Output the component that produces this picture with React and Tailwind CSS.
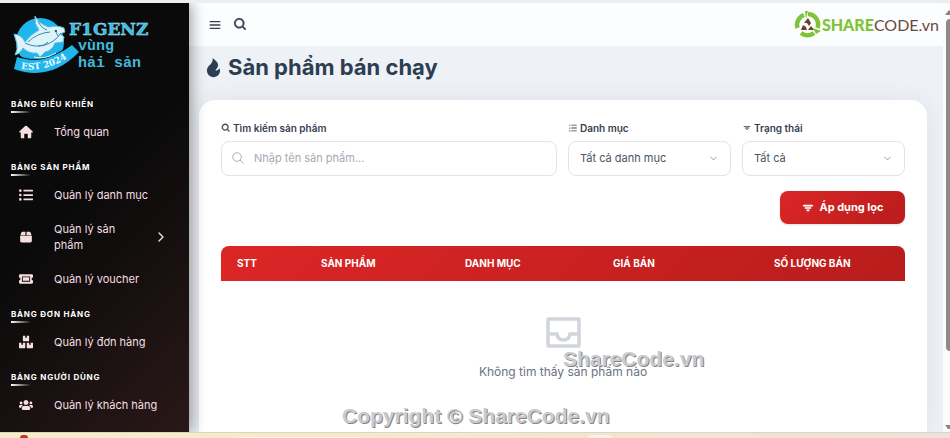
import { BiFilter, BiMenu, BiSearch } from 'react-icons/bi';
import { FaBoxes, FaListUl, FaUsers } from 'react-icons/fa';
import { IoSearchOutline } from 'react-icons/io5';
import { RiFireFill, RiListUnordered } from 'react-icons/ri';
import { ChevronDown, ChevronRight } from 'lucide-react';

const HomeIcon = (props) => (
    <svg viewBox="0 0 24 24" fill="currentColor" {...props}>
        <path d="M10.500 1.800q1.500-1.300 3 0L23.500 11q.8 1.800-1.200 2H21v8q0 1.500-1.500 1.500H15V16q0-1-1-1h-4q-1 0-1 1v6.500H4.500Q3 22.500 3 21v-8H1.700q-2-.2-1.200-2Z" />
    </svg>
);

const BoxIcon = (props) => (
    <svg viewBox="0 0 24 24" fill="currentColor" {...props}>
        <path d="M6 3h5v6H2.500L4 4.500Q4.500 3 6 3ZM13 3h5q1.500 0 2 1.500L21.500 9H13ZM2 10h20v9q0 2.500-2.500 2.500h-15Q2 21.500 2 19Z" />
    </svg>
);

const TicketIcon = (props) => (
    <svg viewBox="0 0 24 24" fill="currentColor" {...props}>
        <path fillRule="evenodd" d="M2 4h20q2 0 2 2v3.500a2.500 2.500 0 0 0 0 5V18q0 2-2 2H2q-2 0-2-2v-3.500a2.500 2.500 0 0 0 0-5V6q0-2 2-2ZM5 7.500v9h14v-9Z" />
        <path d="M6.500 9h11v6h-11z" />
    </svg>
);

const menu = [
    { title: 'BẢNG ĐIỀU KHIỂN', items: [{ label: 'Tổng quan', icon: HomeIcon }] },
    {
        title: 'BẢNG SẢN PHẨM',
        items: [
            { label: 'Quản lý danh mục', icon: FaListUl },
            { label: 'Quản lý sản phẩm', icon: BoxIcon, more: true },
            { label: 'Quản lý voucher', icon: TicketIcon },
        ],
    },
    { title: 'BẢNG ĐƠN HÀNG', items: [{ label: 'Quản lý đơn hàng', icon: FaBoxes }] },
    { title: 'BẢNG NGƯỜI DÙNG', items: [{ label: 'Quản lý khách hàng', icon: FaUsers }] },
];

function BrandLogo() {
    return (
        <svg className="ml-3 h-[60px] w-[144px] shrink-0" viewBox="0 0 144 60">
            <circle cx="28" cy="27" r="24" fill="#1fb6ee" />
            <path d="M5 42q25 10 55-12l7 7Q38 67 2 54Z" fill="#1fb6ee" />
            <path d="M6 41q24 11 54-12" fill="none" stroke="#0b0b0b" strokeWidth="1" />
            <path d="M2 19q8 1 11 8 6-8 14-12-5-6-4-14 4 8 14 11 9-2 15 1l1 4-5 2 4 3-1 5-8 1q-3 8-10 9l-5 5-3-4q-8 1-14-5-3 6-8 7 3-6 2-11Z" fill="#dff3fb" stroke="#58bfdf" strokeWidth="1" />
            <path d="m13 28q10 5 20 2t16-12M26 6q3 7 9 9m-19 12q9-9 22-10M26 31q7 0 10-4m7-12 3 6" fill="none" stroke="#2b8fb4" strokeWidth="1" />
            <circle cx="44" cy="16" r="1" fill="#0b3a50" />
            <path d="M22 42q10 3 22-4" fill="none" stroke="#e6faff" strokeWidth="1" />
            <path id="badge-arc" d="M9 54Q38 58 64 37" fill="none" />
            <text fill="#eefcff" fontFamily="DejaVu Serif" fontWeight="700" fontSize="9">
                <textPath href="#badge-arc">EST 2024</textPath>
            </text>
            <text x="57" y="20" fill="#35bce9" stroke="#a4e6f8" strokeWidth="0.4" fontFamily="DejaVu Serif" fontWeight="700" fontSize="17">F1GENZ</text>
            <text x="66" y="35" fill="#43b9da" fontFamily="Liberation Mono, monospace" fontWeight="700" fontSize="15">vùng</text>
            <text x="66" y="52" fill="#43b9da" fontFamily="Liberation Mono, monospace" fontWeight="700" fontSize="15">hải sản</text>
        </svg>
    );
}

function ShareLogo() {
    return (
        <a href="#" className="flex items-center gap-[1px] font-['Lato',sans-serif] text-base leading-none">
            <svg className="size-[27px]" viewBox="0 0 27 27">
                <g fill="none" stroke="#7fc436" strokeWidth="4.500">
                    <path d="M3.500 17A10.500 10.500 0 0 1 10 4" />
                    <path d="M14 3A10.500 10.500 0 0 1 23.500 17" />
                    <path d="M20 22A10.500 10.500 0 0 1 7 22" />
                </g>
                <path d="m11 0 3 0-2 8ZM19 17l8 3-5 3Z" fill="#7fc436" />
                <path d="m10 12 4-5 3 5-2 3-2-3ZM7 19l2-5 3 2 1 3ZM14 19l3-4 3 4Z" fill="#6b4027" />
            </svg>
            <span>
                <span className="font-black text-[#7fc436]">SHARE</span>
                <span className="text-[#6b4a38]">CODE.vn</span>
            </span>
        </a>
    );
}

function Sidebar() {
    return (
        <aside className="z-10 flex w-[189px] shrink-0 flex-col bg-linear-135 from-[#0a0a0a] from-45% to-[#2a1818] pt-3 shadow-[2px_0_14px_rgba(0,0,0,0.4)]">
            <BrandLogo />
            <nav className="mt-[23px] flex flex-col gap-3">
                {menu.map((section) => (
                    <div key={section.title}>
                        <h2 className="pl-[11px] text-[8px] leading-3 font-bold tracking-widest text-white">{section.title}</h2>
                        <div className="mt-[1px] mb-[2px] ml-[11px] h-[2px] w-5 bg-linear-to-r from-white to-transparent"></div>
                        {section.items.map(({ label, icon: Icon, more }) => (
                            <a key={label} href="#" className="flex min-h-[34px] items-center py-[9px] pr-5 pl-[19px] text-[11px] leading-4 text-[#f5dfe1]">
                                <Icon className="mr-[21px] size-[14px] shrink-0" />
                                <span className={more ? 'w-[70px]' : 'whitespace-nowrap'}>{label}</span>
                                {more && <ChevronRight className="-my-1 ml-auto size-4 shrink-0" />}
                            </a>
                        ))}
                    </div>
                ))}
            </nav>
        </aside>
    );
}

function SelectField({ id, label, icon: Icon, option }) {
    return (
        <div>
            <label htmlFor={id} className="mb-[6px] flex items-center gap-[2px] text-[10px] leading-[14px] font-semibold text-[#374151]">
                <Icon className="size-[10px]" />
                {label}
            </label>
            <div className="relative">
                <select id={id} className="h-[35px] w-full appearance-none rounded-lg border border-[#e2e4e8] bg-white px-[11px] text-[11px] text-[#4b5563]">
                    <option>{option}</option>
                </select>
                <ChevronDown className="pointer-events-none absolute top-3 right-3 size-[11px] text-[#8b939f]" />
            </div>
        </div>
    );
}

function Filters() {
    return (
        <form>
            <div className="grid grid-cols-[336fr_163fr_163fr] gap-[11px]">
                <div>
                    <label htmlFor="keyword" className="mb-[6px] flex items-center gap-[2px] text-[10px] leading-[14px] font-semibold text-[#374151]">
                        <BiSearch className="size-[10px] stroke-current stroke-1" />
                        Tìm kiếm sản phẩm
                    </label>
                    <div className="relative">
                        <IoSearchOutline className="absolute top-[10px] left-[10px] size-[14px] text-[#9ca3af]" />
                        <input id="keyword" type="text" placeholder="Nhập tên sản phẩm..." className="h-[35px] w-full rounded-lg border border-[#e2e4e8] bg-white pr-3 pb-[2px] pl-8 text-[11px] placeholder:text-[#a4aab4]" />
                    </div>
                </div>
                <SelectField id="category" label="Danh mục" icon={RiListUnordered} option="Tất cả danh mục" />
                <SelectField id="status" label="Trạng thái" icon={BiFilter} option="Tất cả" />
            </div>
            <div className="mt-[15px] flex justify-end">
                <button type="button" className="flex h-[33px] w-[125px] items-center justify-center gap-1 rounded-lg bg-linear-135 from-[#dc2626] to-[#b91c1c] text-[11px] font-bold text-white shadow-sm">
                    <BiFilter className="size-[14px] stroke-current stroke-1" />
                    Áp dụng lọc
                </button>
            </div>
        </form>
    );
}

function ProductTable() {
    return (
        <table className="mt-[22px] w-full table-fixed text-left">
            <thead>
                <tr className="h-[35px] bg-linear-135 from-[#dc2626] to-[#b91c1c] text-[10px] font-bold text-white">
                    <th className="w-[84px] rounded-tl-lg pl-4">STT</th>
                    <th className="w-[144px] pl-4">SẢN PHẨM</th>
                    <th className="w-[148px] pl-4">DANH MỤC</th>
                    <th className="w-[161px] pl-4">GIÁ BÁN</th>
                    <th className="rounded-tr-lg pl-4">SỐ LƯỢNG BÁN</th>
                </tr>
            </thead>
            <tbody>
                <tr>
                    <td colSpan={5} className="py-9 text-center text-xs text-[#6b7280]">
                        <svg className="mx-auto mb-4 h-[31px] w-[35px] text-[#d1d5db]" viewBox="0 0 35 31" fill="none" stroke="currentColor" strokeWidth="3.500">
                            <rect x="2" y="2" width="31" height="27" rx="0.5" />
                            <path d="M2 17h9q1 6 6.500 6t6.500-6h9" />
                        </svg>
                        Không tìm thấy sản phẩm nào
                    </td>
                </tr>
            </tbody>
        </table>
    );
}

export default function App() {
    return (
        <div className="relative flex h-screen flex-col overflow-hidden bg-[#eceef2] pt-[3px] font-['Inter',sans-serif]">
            <div className="flex min-h-0 flex-1 overflow-hidden">
                <Sidebar />

                {/* Main content */}
                <main className="flex min-w-0 flex-1 flex-col bg-linear-to-r from-[#eef1f6] to-[#eef2f8]">
                    <header className="flex h-[43px] shrink-0 items-center justify-between bg-[#fcfdff] pr-1 pl-[18px] text-[#374151]">
                        <div className="flex items-center gap-[10px]">
                            <button type="button" aria-label="Menu"><BiMenu className="block size-4" /></button>
                            <button type="button" aria-label="Tìm kiếm"><BiSearch className="block size-[15px] stroke-current stroke-1" /></button>
                        </div>
                        <ShareLogo />
                    </header>
                    <h1 className="flex h-[54px] shrink-0 items-center gap-1 pb-3 pl-[14px] text-[22px] font-bold text-[#2c3e50]">
                        <RiFireFill className="size-[21px]" />
                        Sản phẩm bán chạy
                    </h1>
                    <section className="mr-4 ml-[10px] flex-1 rounded-t-2xl bg-white px-[22px] pt-[21px] shadow-[0_0_24px_rgba(0,0,0,0.07)]">
                        <Filters />
                        <ProductTable />
                    </section>
                </main>

                {/* Scrollbar */}
                <div className="z-10 flex w-[7px] shrink-0 flex-col items-end bg-[#fcfcfc] pt-1">
                    <svg className="h-2 w-[5px]" viewBox="0 0 5 8"><path d="M0 8 4 3l1 1v4Z" fill="#858585" /></svg>
                    <div className="mt-1 h-[78%] w-1 rounded-l-sm bg-[#8b8b8b]"></div>
                    <svg className="mt-auto h-2 w-[5px]" viewBox="0 0 5 8"><path d="M0 1h5v4H3Z" fill="#858585" /></svg>
                </div>
            </div>

            {/* Taskbar */}
            <footer className="flex h-[6px] shrink-0 items-end overflow-hidden border-t border-[#d9d5cb] bg-linear-to-r from-[#f8edc6] via-[#f5e8cc] to-[#eee1d9]">
                <div className="ml-5 h-[3px] w-2 rounded-t-full bg-[#bb3a26]"></div>
                <div className="ml-[210px] h-[1px] w-[122px] bg-[#fdf5e2]"></div>
                <div className="ml-[228px] h-[3px] w-6 rounded-t-sm bg-[#fbf2e4]"></div>
            </footer>

            {/* Watermarks */}
            <div className="pointer-events-none absolute top-[347px] left-[563px] z-20 font-['Liberation_Sans',sans-serif] text-[21px] leading-6 font-bold whitespace-nowrap text-[#c9cbce] [text-shadow:1px_1px_0_#858585]">ShareCode.vn</div>
            <div className="pointer-events-none absolute top-[404px] left-[342px] z-20 font-['Liberation_Sans',sans-serif] text-[21px] leading-6 font-bold whitespace-nowrap text-[#c9cbce] [text-shadow:1px_1px_0_#858585]">Copyright © ShareCode.vn</div>
        </div>
    );
}
